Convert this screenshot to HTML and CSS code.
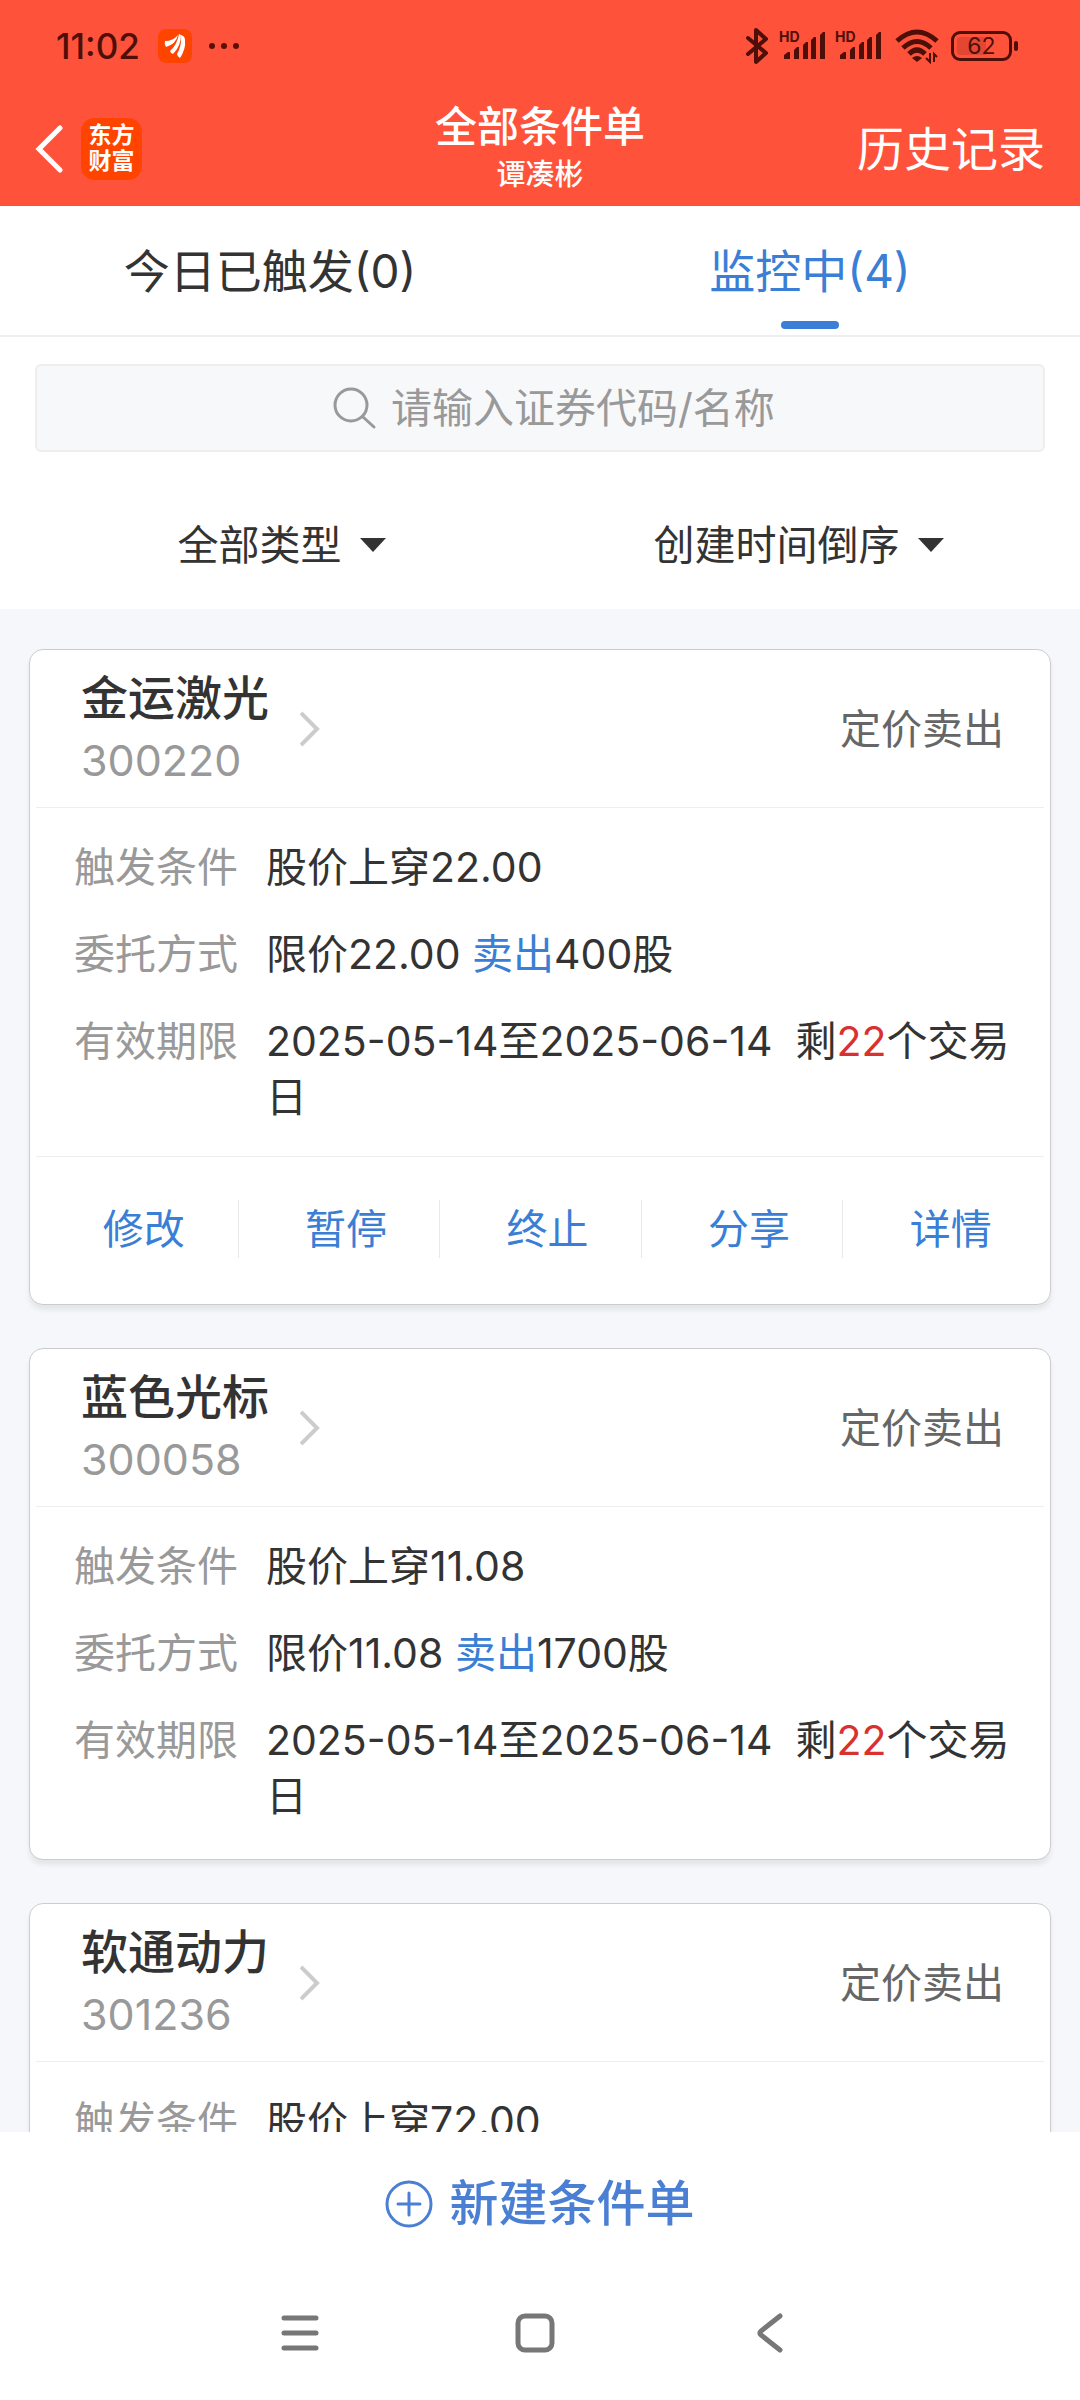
FILE: index.html
```html
<!DOCTYPE html>
<html lang="zh-CN">
  <head>
    <meta charset="utf-8">
    <meta name="viewport" content="width=device-width, initial-scale=1">
    <title>全部条件单</title>
    <link rel="stylesheet" href="styles.css">
  </head>
  <body>
    <div class="status">
      <div class="status-left">
        <span class="clock">11:02</span>
        <svg class="app-icon" viewBox="0 0 34 34">
          <rect width="34" height="34" rx="8" fill="#ff4400"/>
          <path fill="#fff" d="M7 12Q15 12 20 6Q18 15 8 18Q6 15 7 12ZM12 22Q19 16 21 5L23 6Q23 17 15 25Q13 25 12 22ZM19 25Q24 17 23 6Q27 7 27 11Q28 20 22 29Q19 27 19 25Z"/>
        </svg>
        <svg class="dots" viewBox="0 0 32 8" fill="#5a1008">
          <circle cx="4" cy="4" r="3"/><circle cx="16" cy="4" r="3"/><circle cx="28" cy="4" r="3"/>
        </svg>
      </div>
      <div class="status-right">
        <svg class="bluetooth" viewBox="0 0 24 38" fill="none" stroke="#4d0f08" stroke-width="4" stroke-linecap="round" stroke-linejoin="round">
          <path d="M3 11L21 26L11 35V3L21 12L3 27"/>
        </svg>
        <svg class="signal" viewBox="0 0 48 38" fill="#4d0f08">
          <text x="0" y="15" class="hd">HD</text>
          <path d="M5 32V28L9 25H11V32ZM15 32V23L18 20H20V32ZM24 32V18L27 15H29V32ZM32 32V13L35 10H37V32ZM41 32V8L44 5H46V32Z"/>
        </svg>
        <svg class="signal" viewBox="0 0 48 38" fill="#4d0f08">
          <text x="0" y="15" class="hd">HD</text>
          <path d="M5 32V28L9 25H11V32ZM15 32V23L18 20H20V32ZM24 32V18L27 15H29V32ZM32 32V13L35 10H37V32ZM41 32V8L44 5H46V32Z"/>
        </svg>
        <svg class="wifi" viewBox="0 0 44 36" fill="none" stroke="#4d0f08" stroke-width="5">
          <path d="M2 13Q22 -5 42 13M8 20Q22 7 36 20M14 26Q22 18 30 26"/>
          <path d="M22 34L17 30Q22 26 27 30Z" fill="#4d0f08" stroke="none"/>
          <path d="M35 25V34L31 30M39 34V26L42 29" stroke-width="2"/>
        </svg>
        <span class="battery">62</span>
      </div>
    </div>

    <header class="header">
      <div class="header-left">
        <button class="back" aria-label="返回">
          <svg viewBox="0 0 28 50" fill="none" stroke="#fff" stroke-width="5" stroke-linecap="round"><path d="M25 4L4 25L25 46"/></svg>
        </button>
        <span class="logo">东方<br>财富</span>
      </div>
      <div class="header-title">
        <h1>全部条件单</h1>
        <p>谭凑彬</p>
      </div>
      <a class="history" href="#">历史记录</a>
    </header>

    <nav class="tabs">
      <a class="tab" href="#">今日已触发(0)</a>
      <a class="tab active" href="#">监控中(4)</a>
    </nav>

    <div class="tools">
      <label class="search">
        <svg viewBox="0 0 44 44" fill="none" stroke="#999" stroke-width="3" stroke-linecap="round">
          <circle cx="18" cy="19" r="16"/><path d="M30 31L41 41"/>
        </svg>
        <input type="text" placeholder="请输入证券代码/名称" aria-label="请输入证券代码/名称">
      </label>
      <div class="filters">
        <label class="filter">
          <select aria-label="全部类型"><option>全部类型</option></select>
          <svg viewBox="0 0 26 14"><path d="M0 0H26L13 14Z" fill="#333"/></svg>
        </label>
        <label class="filter">
          <select aria-label="创建时间倒序"><option>创建时间倒序</option></select>
          <svg viewBox="0 0 26 14"><path d="M0 0H26L13 14Z" fill="#333"/></svg>
        </label>
      </div>
    </div>

    <main class="list">
      <section class="card">
        <div class="card-head">
          <div>
            <h2>金运激光</h2>
            <p class="code">300220</p>
          </div>
          <svg class="more" viewBox="0 0 20 36" fill="none" stroke="#ccc" stroke-width="4"><path d="M1 2L17 18L1 34"/></svg>
          <span class="kind">定价卖出</span>
        </div>
        <dl class="info">
          <dt>触发条件</dt>
          <dd>股价上穿22.00</dd>
          <dt>委托方式</dt>
          <dd>限价22.00 <span class="sell">卖出</span>400股</dd>
          <dt>有效期限</dt>
          <dd>2025-05-14至2025-06-14&nbsp;&nbsp;剩<span class="left">22</span>个交易日</dd>
        </dl>
        <div class="actions">
          <button>修改</button>
          <button>暂停</button>
          <button>终止</button>
          <button>分享</button>
          <button>详情</button>
        </div>
      </section>

      <section class="card">
        <div class="card-head">
          <div>
            <h2>蓝色光标</h2>
            <p class="code">300058</p>
          </div>
          <svg class="more" viewBox="0 0 20 36" fill="none" stroke="#ccc" stroke-width="4"><path d="M1 2L17 18L1 34"/></svg>
          <span class="kind">定价卖出</span>
        </div>
        <dl class="info">
          <dt>触发条件</dt>
          <dd>股价上穿11.08</dd>
          <dt>委托方式</dt>
          <dd>限价11.08 <span class="sell">卖出</span>1700股</dd>
          <dt>有效期限</dt>
          <dd>2025-05-14至2025-06-14&nbsp;&nbsp;剩<span class="left">22</span>个交易日</dd>
        </dl>
      </section>

      <section class="card">
        <div class="card-head">
          <div>
            <h2>软通动力</h2>
            <p class="code">301236</p>
          </div>
          <svg class="more" viewBox="0 0 20 36" fill="none" stroke="#ccc" stroke-width="4"><path d="M1 2L17 18L1 34"/></svg>
          <span class="kind">定价卖出</span>
        </div>
        <dl class="info">
          <dt>触发条件</dt>
          <dd>股价上穿72.00</dd>
        </dl>
      </section>
    </main>

    <footer class="footer">
      <button class="create">
        <svg viewBox="0 0 48 48" fill="none" stroke="#4a7fd4" stroke-width="3" stroke-linecap="round">
          <circle cx="24" cy="24" r="22"/><path d="M24 13V35M13 24H35"/>
        </svg>
        新建条件单
      </button>
    </footer>

    <div class="sysnav">
      <button aria-label="菜单">
        <svg viewBox="0 0 40 40" stroke="#777" stroke-width="5" stroke-linecap="round"><path d="M4 5H36M4 20H36M4 35H36"/></svg>
      </button>
      <button aria-label="主页">
        <svg viewBox="0 0 40 40" fill="none" stroke="#777" stroke-width="5"><rect x="3" y="3" width="34" height="34" rx="7"/></svg>
      </button>
      <button aria-label="后退">
        <svg viewBox="0 0 40 40" fill="none" stroke="#777" stroke-width="5" stroke-linecap="round"><path d="M30 3L11 18Q9 20 11 22L30 37"/></svg>
      </button>
    </div>
  </body>
</html>
```
FILE: styles.css
```css
*{
  box-sizing: border-box;
}
body{
  margin:0;
  height:100vh;
  display:flex;
  flex-direction: column;
  font-family: Inter, "Noto Sans CJK SC", sans-serif;
  font-size:41px;
  line-height:56px;
  color:#333;
  background:#f6f7fa;
}
h1,h2,p,dl,dd{
  margin:0;
}
svg{
  display:block;
  flex:none;
}
a{
  color:inherit;
  text-decoration: none;
}
button{
  font:inherit;
  color:inherit;
  background:none;
  border:none;
  padding:0;
}

/* status bar */
.status{
  flex:none;
  display:flex;
  justify-content: space-between;
  align-items: center;
  height:92px;
  padding:0 68px 0 56px;
  background:#ff523b;
  color:#4d0f08;
}
.status-left,.status-right{
  display:flex;
  align-items: center;
}
.clock{
  font-size:35px;
  font-weight:500;
}
.app-icon{
  width:34px;
  margin-left:18px;
}
.dots{
  width:32px;
  margin-left:16px;
}
.bluetooth{
  width:24px;
  margin-right:10px;
}
.signal{
  width:48px;
  margin-right:8px;
}
.hd{
  font-size:14px;
  font-weight:700;
}
.wifi{
  width:44px;
  margin:0 12px 0 4px;
}
.battery{
  position: relative;
  width:61px;
  height:30px;
  border:3px solid #4d0f08;
  border-radius:9px;
  background:linear-gradient(90deg, #e34733 60%, transparent 60%) content-box;
  padding:3px;
  font-size:23px;
  line-height:18px;
  text-align: center;
}
.battery::after{
  content:"";
  position: absolute;
  right:-9px;
  top:7px;
  width:4px;
  height:10px;
  border-radius:2px;
  background:#4d0f08;
}

/* header */
.header{
  flex:none;
  display:grid;
  grid-template-columns: 1fr auto 1fr;
  align-items: center;
  height:114px;
  padding:0 35px;
  background:#ff523b;
  color:#fff;
}
.header-left{
  display:flex;
  align-items: center;
  gap:18px;
}
.back svg{
  width:28px;
}
.logo{
  width:61px;
  padding:4px 0 6px;
  border-radius:14px;
  background:#ff4400;
  font-size:23px;
  font-weight:700;
  line-height:26px;
  text-align: center;
}
.header-title{
  text-align: center;
}
.header-title h1{
  font-size:42px;
  font-weight:500;
  line-height:52px;
}
.header-title p{
  font-size:29px;
  font-weight:500;
  line-height:44px;
}
.history{
  justify-self: end;
  font-size:47px;
}

/* tabs */
.tabs{
  flex:none;
  display:grid;
  grid-template-columns: 1fr 1fr;
  background:#fff;
  border-bottom:2px solid #eee;
}
.tab{
  display:flex;
  flex-direction: column;
  align-items: center;
  padding-top:37px;
  height:129px;
  font-size:46px;
}
.tab.active{
  color:#3a7fd5;
}
.tab.active::after{
  content:"";
  width:58px;
  height:8px;
  margin-top:22px;
  border-radius:4px;
  background:#3a7fd5;
}

/* search + filters */
.tools{
  flex:none;
  background:#fff;
  padding:27px 35px 0;
}
.search{
  display:flex;
  align-items: center;
  justify-content: center;
  gap:14px;
  height:88px;
  padding-left:30px;
  background:#f7f8fa;
  border:2px solid #eee;
  border-radius:6px;
}
.search svg{
  width:44px;
}
.search input{
  width:386px;
  padding:0;
  border:none;
  background:none;
  font:inherit;
  color:#333;
}
.search input::placeholder{
  color:#999;
  opacity:1;
}
.filters{
  display:grid;
  grid-template-columns: 1fr 1fr;
  height:157px;
  margin:0 -12px;
  padding-top:28px;
}
.filter{
  display:flex;
  justify-content: center;
  align-items: center;
  gap:18px;
}
.filter select{
  appearance:none;
  border:none;
  padding:0;
  background:none;
  font:inherit;
  color:inherit;
}
.filter svg{
  width:26px;
}

/* order cards */
.list{
  flex:1;
  min-height:0;
  overflow-y: auto;
  scrollbar-width: none;
  padding:40px 29px 0;
}
.card{
  margin-bottom:43px;
  padding:0 6px;
  background:#fff;
  border:1px solid #ccc;
  border-radius:14px;
  box-shadow:0 5px 5px rgba(0,0,0,0.07);
}
.card-head{
  display:flex;
  align-items: center;
  height:158px;
  padding:0 40px 0 45px;
  border-bottom:1px solid #eee;
}
.card-head h2{
  font-size:47px;
  font-weight:500;
  line-height:62px;
}
.code{
  font-size:43px;
  line-height:62px;
  color:#999;
}
.more{
  width:20px;
  margin-left:31px;
}
.kind{
  margin-left:auto;
  color:#666;
}
.info{
  display:grid;
  grid-template-columns: auto 1fr;
  gap:31px 28px;
  padding:31px 24px 31px 38px;
}
.info:last-child{
  padding-bottom:35px;
}
.info dt{
  color:#999;
}
.sell{
  color:#3a7fd5;
}
.left{
  color:#d93030;
}
.actions{
  display:grid;
  grid-template-columns: repeat(5, 1fr);
  height:148px;
  padding:43px 0 46px;
  border-top:1px solid #eee;
}
.actions button{
  padding-left:14px;
  color:#3a7fd5;
}
.actions button + button{
  border-left:1px solid #e8e8e8;
}

/* bottom */
.footer{
  flex:none;
  display:flex;
  justify-content: center;
  height:144px;
  background:#fff;
}
.create{
  display:flex;
  align-items: center;
  gap:16px;
  color:#4a7fd4;
  font-size:49px;
  font-weight:500;
}
.create svg{
  width:48px;
}
.sysnav{
  flex:none;
  display:flex;
  justify-content: center;
  align-items: flex-start;
  gap:195px;
  height:124px;
  padding:37px 10px 0 0;
  background:#fff;
}
.sysnav svg{
  width:40px;
}
```
